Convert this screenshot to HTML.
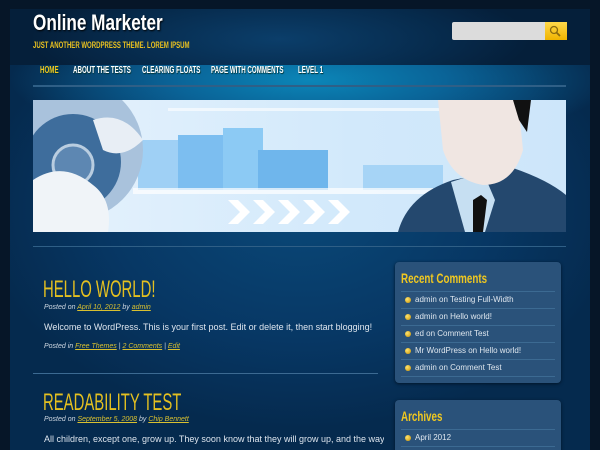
<!DOCTYPE html>
<html><head><meta charset="utf-8"><style>
*{margin:0;padding:0;box-sizing:border-box}
html,body{width:600px;height:450px;overflow:hidden}
body{background:#061628;font-family:"Liberation Sans",sans-serif;position:relative}
.wrap{position:absolute;left:10px;top:9px;width:580px;height:441px;background:radial-gradient(ellipse 320px 220px at 290px 200px,#0a4878,#073764 60%,#052a4e);}
.hdr{position:absolute;left:10px;top:9px;width:580px;height:56px;background:radial-gradient(ellipse 250px 60px at 270px 30px,#0b3e6a,#06294a 70%,#051f3a)}
.nav{position:absolute;left:10px;top:65px;width:580px;height:80px;background:radial-gradient(ellipse 300px 70px at 300px 15px,#0b86b8,#0a6498 45%,rgba(7,60,105,0) 100%)}
.ab{position:absolute;white-space:nowrap;transform-origin:0 0}
h1{position:absolute;left:33px;top:10px;color:#fff;font:bold 22px "Liberation Sans",sans-serif;text-shadow:1px 1px 2px #000;transform:scaleX(.78);transform-origin:0 0;white-space:nowrap}
.tag{left:33px;top:40px;color:#e8c020;font:bold 9px "Liberation Sans",sans-serif;transform:scaleX(.67)}
.navi{top:65px;color:#fff;font:bold 10px "Liberation Sans",sans-serif;transform:scaleX(.62);text-shadow:1px 1px 1px #033}
.hl{position:absolute;left:33px;width:533px;height:2px;background:#2f5f86}
.title{color:#e4c020;font:24px "Liberation Sans",sans-serif;transform:scaleX(.62)}
.meta{font:italic 7px "Liberation Sans",sans-serif;color:#cfd8e2}
.meta u{color:#d9c030}
.txt{font:9px "Liberation Sans",sans-serif;color:#dde5ee}
.box{position:absolute;left:395px;width:166px;background:#2a527a;border-radius:4px;box-shadow:0 1px 3px #021528;overflow:hidden}
.box h3{color:#f0c820;font:bold 14px "Liberation Sans",sans-serif;margin:8px 0 0 6px;transform:scaleX(.7);transform-origin:0 0;white-space:nowrap}
.box ul{list-style:none;margin:5px 6px 0 6px;border-top:1px solid #3c6a92}
.box li{height:17px;border-bottom:1px solid #3c6a92;color:#dfe7ef;font:8px/16px "Liberation Sans",sans-serif;padding-left:14px;position:relative}
.box li:before{content:"";position:absolute;left:4px;top:5px;width:6px;height:6px;border-radius:50%;background:radial-gradient(circle at 35% 35%,#ffe470,#c89000)}
</style></head><body>
<div class="wrap"></div>
<div class="nav"></div>
<div class="hdr"></div>
<h1>Online Marketer</h1>
<div class="ab tag">JUST ANOTHER WORDPRESS THEME. LOREM IPSUM</div>
<div class="ab" style="left:452px;top:22px;width:93px;height:18px;background:#dcdcdc;border-radius:2px 0 0 2px"></div>
<div class="ab" style="left:545px;top:22px;width:22px;height:18px;background:linear-gradient(#ffd84a,#f0b400)"><svg width="22" height="18"><circle cx="9" cy="8" r="3.5" fill="none" stroke="#8a6a10" stroke-width="1.3"/><line x1="11.5" y1="10.5" x2="15" y2="14" stroke="#8a6a10" stroke-width="1.8"/></svg></div>
<div class="ab navi" style="left:40px;color:#f0c820">HOME</div>
<div class="ab navi" style="left:73px">ABOUT THE TESTS</div>
<div class="ab navi" style="left:142px">CLEARING FLOATS</div>
<div class="ab navi" style="left:211px">PAGE WITH COMMENTS</div>
<div class="ab navi" style="left:298px">LEVEL 1</div>
<div class="hl" style="top:85px"></div>
<svg class="ab" style="left:33px;top:100px" width="533" height="132">
<defs><linearGradient id="bg" x1="0" x2="1"><stop offset="0" stop-color="#e6f2fc"/><stop offset=".6" stop-color="#d2e9fb"/><stop offset="1" stop-color="#cde6fa"/></linearGradient></defs>
<rect width="533" height="132" fill="url(#bg)"/>
<rect x="135" y="8" width="340" height="3" fill="#fff" opacity=".6"/>
<rect x="105" y="40" width="40" height="50" fill="#9fd0f5"/><rect x="145" y="35" width="45" height="55" fill="#7cbef0"/><rect x="190" y="28" width="40" height="62" fill="#8ccaf4"/><rect x="225" y="50" width="70" height="40" fill="#6fb6ec"/><rect x="330" y="65" width="80" height="25" fill="#a6d4f6"/><rect x="100" y="88" width="300" height="6" fill="#fff" opacity=".7"/>
<path d="M195 100l12 12-12 12h10l12-12-12-12zM220 100l12 12-12 12h10l12-12-12-12zM245 100l12 12-12 12h10l12-12-12-12zM270 100l12 12-12 12h10l12-12-12-12zM295 100l12 12-12 12h10l12-12-12-12z" fill="#fff"/>
<circle cx="40" cy="50" r="70" fill="#a9c2dc"/><circle cx="40" cy="62" r="48" fill="#3e6d9c"/><circle cx="40" cy="65" r="20" fill="#5d87b2" stroke="#b9cde0" stroke-width="3"/>
<path d="M0 80 Q30 60 60 85 Q80 100 75 132 H0z" fill="#f0f4f8"/><path d="M60 20 Q90 10 110 40 Q90 60 70 50z" fill="#e8eef5"/>
<path d="M365 132 Q375 95 420 80 L480 68 Q515 80 533 95 V132z" fill="#24486e"/>
<path d="M418 82 L450 72 L462 100 L452 132 L432 132z" fill="#c6dff2"/>
<path d="M440 100 L448 95 L454 100 L450 132 L440 132z" fill="#111"/>
<path d="M405 0 H485 L490 50 Q480 85 450 85 Q420 80 410 50z" fill="#f0e6e2"/>
<path d="M480 0 H498 L494 32 L486 20z" fill="#111"/>
</svg>
<div class="hl" style="top:246px;height:1px"></div>
<div class="ab title" style="left:43px;top:276px">HELLO WORLD!</div>
<div class="ab meta" style="left:44px;top:304px">Posted on <u>April 10, 2012</u> by <u>admin</u></div>
<div class="ab txt" style="left:44px;top:322px">Welcome to WordPress. This is your first post. Edit or delete it, then start blogging!</div>
<div class="ab meta" style="left:44px;top:343px">Posted in <u>Free Themes</u> | <u>2 Comments</u> | <u>Edit</u></div>
<div class="ab" style="left:33px;top:373px;width:345px;height:1px;background:#3c6a92"></div>
<div class="ab title" style="left:43px;top:389px">READABILITY TEST</div>
<div class="ab meta" style="left:44px;top:416px">Posted on <u>September 5, 2008</u> by <u>Chip Bennett</u></div>
<div class="ab txt" style="left:44px;top:434px;width:340px;overflow:hidden">All children, except one, grow up. They soon know that they will grow up, and the way Wendy</div>
<div class="box" style="top:262px;height:121px"><h3>Recent Comments</h3><ul>
<li>admin on Testing Full-Width</li><li>admin on Hello world!</li><li>ed on Comment Test</li><li>Mr WordPress on Hello world!</li><li>admin on Comment Test</li></ul></div>
<div class="box" style="top:400px;height:60px"><h3>Archives</h3><ul><li>April 2012</li><li></li></ul></div>
</body></html>
